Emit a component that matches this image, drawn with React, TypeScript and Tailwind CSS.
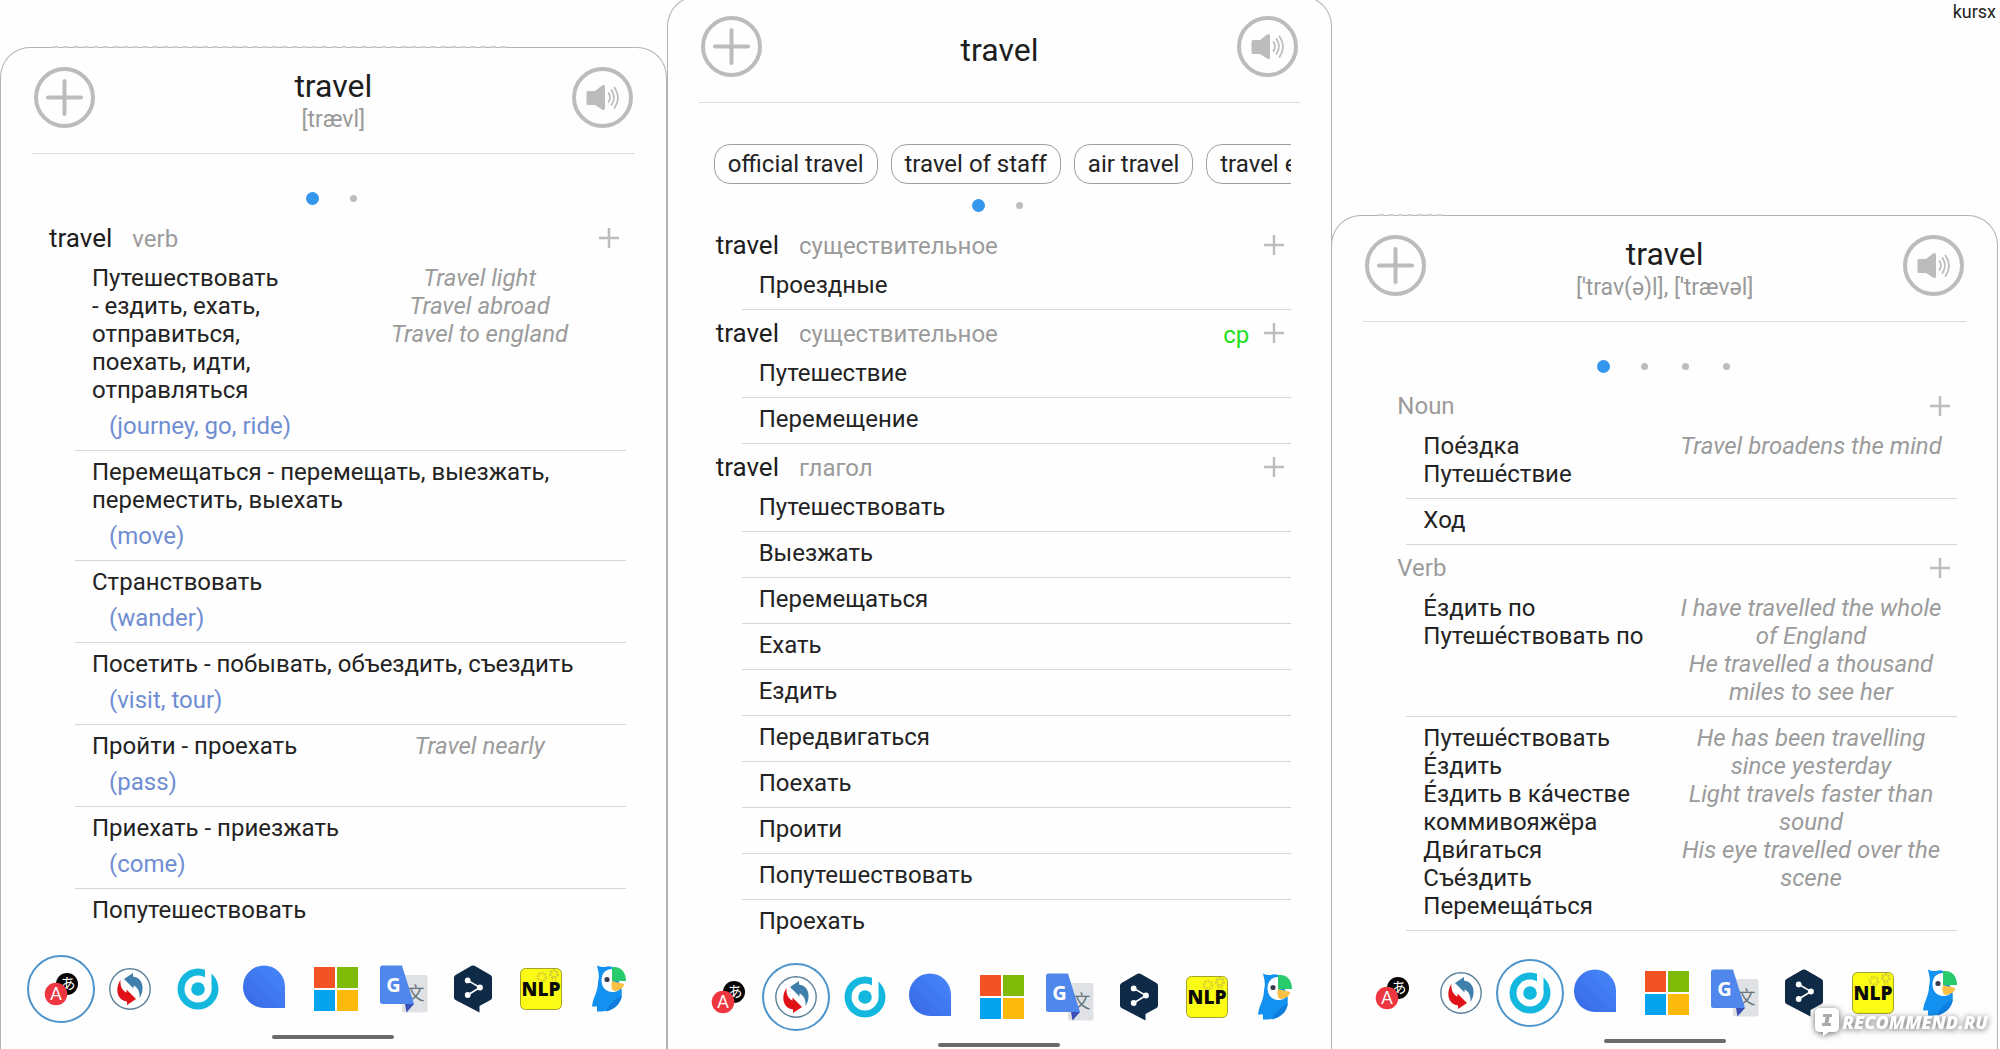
import type { ReactNode } from 'react';
import clsx from 'clsx';

interface Row {
    lines: string[];
    gloss?: string;
    examples?: string[];
}

interface Section {
    word?: string;
    pos: string;
    badge?: string;
    rows: Row[];
    openEnded?: boolean;
}

interface SheetProps {
    title: string;
    phonetic?: string;
    chips?: string[];
    pages: number;
    sections: Section[];
    activeEngine: string;
    className?: string;
    footerClassName?: string;
    peekClassName?: string;
}

const verbSections: Section[] = [
    {
        word: 'travel',
        pos: 'verb',
        openEnded: true,
        rows: [
            {
                lines: ['Путешествовать', '- ездить, ехать,', 'отправиться,', 'поехать, идти,', 'отправляться'],
                gloss: '(journey, go, ride)',
                examples: ['Travel light', 'Travel abroad', 'Travel to england'],
            },
            { lines: ['Перемещаться - перемещать, выезжать,', 'переместить, выехать'], gloss: '(move)' },
            { lines: ['Странствовать'], gloss: '(wander)' },
            { lines: ['Посетить - побывать, объездить, съездить'], gloss: '(visit, tour)' },
            { lines: ['Пройти - проехать'], gloss: '(pass)', examples: ['Travel nearly'] },
            { lines: ['Приехать - приезжать'], gloss: '(come)' },
            { lines: ['Попутешествовать'] },
        ],
    },
];

const mixedSections: Section[] = [
    { word: 'travel', pos: 'существительное', rows: [{ lines: ['Проездные'] }] },
    {
        word: 'travel',
        pos: 'существительное',
        badge: 'ср',
        rows: [{ lines: ['Путешествие'] }, { lines: ['Перемещение'] }],
    },
    {
        word: 'travel',
        pos: 'глагол',
        openEnded: true,
        rows: [
            { lines: ['Путешествовать'] },
            { lines: ['Выезжать'] },
            { lines: ['Перемещаться'] },
            { lines: ['Ехать'] },
            { lines: ['Ездить'] },
            { lines: ['Передвигаться'] },
            { lines: ['Поехать'] },
            { lines: ['Проити'] },
            { lines: ['Попутешествовать'] },
            { lines: ['Проехать'] },
        ],
    },
];

const stressedSections: Section[] = [
    {
        pos: 'Noun',
        rows: [
            { lines: ['Пое́здка', 'Путеше́ствие'], examples: ['Travel broadens the mind'] },
            { lines: ['Ход'] },
        ],
    },
    {
        pos: 'Verb',
        rows: [
            {
                lines: ['Е́здить по', 'Путеше́ствовать по'],
                examples: ['I have travelled the whole of England', 'He travelled a thousand miles to see her'],
            },
            {
                lines: [
                    'Путеше́ствовать',
                    'Е́здить',
                    'Е́здить в ка́честве',
                    'коммивояжёра',
                    'Дви́гаться',
                    'Съе́здить',
                    'Перемеща́ться',
                ],
                examples: [
                    'He has been travelling since yesterday',
                    'Light travels faster than sound',
                    'His eye travelled over the scene',
                ],
            },
        ],
    },
];

function Glyph({ children }: { children: ReactNode }) {
    return (
        <svg viewBox="-24 -24 48 48" className="h-12 w-12" aria-hidden="true">
            {children}
        </svg>
    );
}

const engines: { name: string; icon: ReactNode }[] = [
    {
        name: 'Yomi',
        icon: (
            <Glyph>
                <circle cx="6" cy="-5" r="11" fill="#050505" />
                <text x="7" y="0" fontSize="15" fill="#fff" textAnchor="middle" fontFamily="Noto Sans CJK JP, sans-serif">あ</text>
                <circle cx="-5" cy="5" r="11.3" fill="#ec3740" />
                <text x="-5" y="11" fontSize="17" fill="#fff" textAnchor="middle" fontFamily="Lato, sans-serif">A</text>
            </Glyph>
        ),
    },
    {
        name: 'Reverso',
        icon: (
            <Glyph>
                <circle r="20.2" fill="#fff" stroke="#5b8199" strokeWidth="1.4" />
                <path d="M-6 -10L3 -16V-12.5C13.5 -11 15 1 9.5 9C10 3 8 -1.5 3.5 -3.500V-0.500Z" fill="#3f7fab" />
                <path d="M6 10L-3 16V12.500C-13.500 11 -15 -1 -9.500 -9C-10 -3 -8 1.500 -3.500 3.500V0.500Z" fill="#e01218" />
            </Glyph>
        ),
    },
    {
        name: 'Dict',
        icon: (
            <Glyph>
                <circle r="20.5" fill="#14b8df" />
                <circle r="13.5" fill="#fff" />
                <path d="M7 -22H13.5V0H7Z" fill="#fff" />
                <circle r="6.8" fill="#14b8df" />
            </Glyph>
        ),
    },
    {
        name: 'Alice',
        icon: (
            <Glyph>
                <defs>
                    <linearGradient id="drop" x1="0" y1="1" x2="1" y2="0">
                        <stop offset="0" stopColor="#3768e4" />
                        <stop offset="1" stopColor="#4788fb" />
                    </linearGradient>
                </defs>
                <path d="M-3 -23.5A21 21 0 0 1 18 -2.5V19H-3A21 21 0 0 1 -24 -2.5A21 21 0 0 1 -3 -23.5Z" fill="url(#drop)" />
            </Glyph>
        ),
    },
    {
        name: 'Microsoft',
        icon: (
            <Glyph>
                <path d="M-22 -22H-1V-1H-22Z" fill="#f25325" />
                <path d="M1 -22H22V-1H1Z" fill="#7fba08" />
                <path d="M-22 1H-1V22H-22Z" fill="#06a4ee" />
                <path d="M1 1H22V22H1Z" fill="#fdb90c" />
            </Glyph>
        ),
    },
    {
        name: 'Google',
        icon: (
            <Glyph>
                <rect x="-2" y="-14" width="25.5" height="37.5" rx="2" fill="#dfe1e4" />
                <text x="11.5" y="11" fontSize="18" fill="#66757b" textAnchor="middle" fontFamily="Noto Sans CJK SC, sans-serif">文</text>
                <path d="M1 15H10L2.5 23.5Z" fill="#3c4fb4" />
                <path d="M-21.5 -23.5H-2L10 15H-21.5Q-24 15 -24 12.5V-21Q-24 -23.5 -21.5 -23.5Z" fill="#5087ec" />
                <text x="-10.5" y="2.5" fontSize="20" fontWeight="700" fill="#fff" textAnchor="middle" fontFamily="Open Sans, sans-serif">G</text>
            </Glyph>
        ),
    },
    {
        name: 'DeepL',
        icon: (
            <Glyph>
                <path d="M-1.5 -23.2Q0 -24 1.5 -23.2L17.5 -14Q19 -13 19 -11.5V8.5Q19 10 17.5 11L6.5 17V23.5L-17.5 11Q-19 10 -19 8.5V-11.5Q-19 -13 -17.5 -14Z" fill="#0f2a47" />
                <path d="M-5.3 -8.6L7 -1.5L-5.3 6" fill="none" stroke="#fff" strokeWidth="1.6" />
                <circle cx="-5.3" cy="-8.6" r="2.9" fill="#fff" />
                <circle cx="7" cy="-1.5" r="2.9" fill="#fff" />
                <circle cx="-5.3" cy="6" r="2.9" fill="#fff" />
            </Glyph>
        ),
    },
    {
        name: 'NLP',
        icon: (
            <Glyph>
                <rect x="-20.5" y="-20.5" width="41" height="41" rx="5" fill="#fbfb16" stroke="#a3a32c" />
                <circle cx="1" cy="-12" r="4" fill="none" stroke="#dcd62a" strokeWidth="3" strokeDasharray="2 1" />
                <circle cx="13" cy="-15" r="3.5" fill="none" stroke="#d2cc35" strokeWidth="3" strokeDasharray="2 1" />
                <circle cx="13" cy="-7" r="2.5" fill="none" stroke="#e2dc2a" strokeWidth="2" strokeDasharray="2 1" />
                <text y="6.5" fontSize="19" fontWeight="800" fill="#0a0a0a" textAnchor="middle" fontFamily="Open Sans, sans-serif">NLP</text>
            </Glyph>
        ),
    },
    {
        name: 'Papago',
        icon: (
            <Glyph>
                <path d="M-13 -23.5Q-8 -21 -3 -22.5Q0 -23 2 -22L11 -3C14 8 9 21 -8 22.5H-13V17.5H-18C-17 8 -12 3 -12 -7C-10 -14 -12 -18 -13 -23.5Z" fill="#1391f0" />
                <path d="M-2 18C3 12 7 9 12 6C11 14 6 20 -4 22.5Z" fill="#0f7ddd" />
                <path d="M2 -20C-5 -20 -8.5 -15 -8.5 -8.5C-8.5 -2 -4 3 2 3C5 3 7 2.5 9 1L2 -8Z" fill="#fff" />
                <circle cx="-3" cy="-9.5" r="2.6" fill="#3b3b52" />
                <path d="M2 -8L14 -5C14 -1 9 2 4 2C1 0 1 -4 2 -8Z" fill="#f9c043" />
                <path d="M2 -22C11 -23 16 -17 16 -8H2Z" fill="#28cb6b" />
            </Glyph>
        ),
    },
];

function RoundButton({ label, children }: { label: string; children: ReactNode }) {
    return (
        <button aria-label={label} className="h-[61px] w-[61px] shrink-0">
            <svg viewBox="0 0 61 61" className="h-full w-full" fill="none" stroke="#bcbcbc" strokeLinecap="round">
                <circle cx="30.5" cy="30.5" r="28.5" strokeWidth="4" />
                {children}
            </svg>
        </button>
    );
}

function SheetHeader({ title, phonetic }: { title: string; phonetic?: string }) {
    return (
        <header className="mx-[31px] flex items-start justify-between border-b border-[#dcdcdc] px-[2px] pt-[19px] pb-[18px]">
            <RoundButton label="Add">
                <path d="M14 30.5H47M30.5 14V47" strokeWidth="4" />
            </RoundButton>
            <div className="flex h-[68px] flex-col items-center justify-center">
                <h1 className="text-[32px] leading-[38px] text-[#1d1d1d]">{title}</h1>
                {phonetic && <p className="text-[23px] leading-[30px] text-[#9a9a9a]">{phonetic}</p>}
            </div>
            <RoundButton label="Listen">
                <path d="M16 24H23L30 18.5Q33 17 33 20V41Q33 44 30 42.5L23 38H16Q14.5 38 14.5 36.5V25.5Q14.5 24 16 24Z" fill="#bcbcbc" stroke="none" />
                <path d="M36.5 26Q39.5 30.5 36.5 35M39.5 23Q44.5 30.5 39.5 38M42.5 20.5Q49.5 30.5 42.5 41" strokeWidth="1.8" />
            </RoundButton>
        </header>
    );
}

function EntryRow({ row, divided }: { row: Row; divided: boolean }) {
    return (
        <li className={clsx('pt-[7px] pb-2.5 pl-[17px] leading-7', divided && 'border-b border-[#d6d6d6]')}>
            <div className="flex justify-between">
                <div className="whitespace-nowrap text-[#232323]">
                    {row.lines.map((line) => (
                        <p key={line}>{line}</p>
                    ))}
                </div>
                {row.examples && (
                    <div className="mr-2 w-[276px] text-center text-[#9b9b9b] italic">
                        {row.examples.map((example) => (
                            <p key={example}>{example}</p>
                        ))}
                    </div>
                )}
            </div>
            {row.gloss && <p className="mt-2 pl-[17px] text-[#6f8dd2]">{row.gloss}</p>}
        </li>
    );
}

function EntrySection({ section }: { section: Section }) {
    return (
        <section>
            <div className={clsx('flex h-[42px] items-center pt-1 pr-[46px]', section.word ? 'pl-12' : 'pl-[65px]')}>
                <div className="flex flex-1 items-baseline gap-5">
                    {section.word && <h2 className="text-[26px] leading-8 text-[#1d1d1d]">{section.word}</h2>}
                    <span className="leading-8 text-[#9b9b9b]">{section.pos}</span>
                </div>
                {section.badge && <span className="mr-3.5 pt-1 leading-8 text-[#21e021]">{section.badge}</span>}
                <button aria-label="Add entry">
                    <svg viewBox="0 0 22 22" className="h-[22px] w-[22px]" stroke="#bdbdbd" strokeWidth="2.5">
                        <path d="M1 11H21M11 1V21" />
                    </svg>
                </button>
            </div>
            <ul className="mr-10 ml-[74px]">
                {section.rows.map((row, i) => (
                    <EntryRow key={row.lines[0]} row={row} divided={!section.openEnded || i < section.rows.length - 1} />
                ))}
            </ul>
        </section>
    );
}

function Sheet({ title, phonetic, chips, pages, sections, activeEngine, className, footerClassName, peekClassName }: SheetProps) {
    return (
        <article className={clsx('relative -mr-px flex flex-col rounded-t-[30px] border border-b-0 border-[#b3b3b3] bg-[#fefefe]', className)}>
            {/* Page text showing just above the sheet edge */}
            {peekClassName && <div className={clsx('absolute -top-[2px] border-t-2 border-dashed border-[#d0d0d0]', peekClassName)} />}

            <SheetHeader title={title} phonetic={phonetic} />

            {chips && (
                <div className="mt-[41px] mr-10 -mb-[23px] ml-[46px] flex gap-[13px] overflow-hidden">
                    {chips.map((chip) => (
                        <button key={chip} className="h-10 shrink-0 rounded-2xl border border-[#9f9f9f] px-[13px] whitespace-nowrap text-[#232323]">
                            {chip}
                        </button>
                    ))}
                </div>
            )}

            {/* Pager */}
            <div className="mt-[27px] flex h-[34px] items-center justify-center">
                {Array.from({ length: pages }, (_, i) => (
                    <span key={i} className="flex w-[41px] justify-center">
                        <span className={clsx('rounded-full', i === 0 ? 'h-[13px] w-[13px] bg-[#3496ec]' : 'h-[7px] w-[7px] bg-[#bdbdbd]')} />
                    </span>
                ))}
            </div>

            {sections.map((section, i) => (
                <EntrySection key={i} section={section} />
            ))}

            {/* Translation engines */}
            <footer className={clsx('mt-auto', footerClassName)}>
                <nav className="grid grid-cols-9 pr-[21px] pl-[26px]">
                    {engines.map(({ name, icon }) => (
                        <button
                            key={name}
                            aria-label={name}
                            className={clsx(
                                'flex h-[68px] w-[68px] items-center justify-center rounded-full',
                                name === activeEngine && 'border-2 border-[#4c94cb]',
                            )}
                        >
                            {icon}
                        </button>
                    ))}
                </nav>
                <div className="mx-auto mt-3 h-1 w-[122px] rounded-full bg-[#6a6a6a]" />
            </footer>
        </article>
    );
}

export default function App() {
    return (
        <main className="relative min-h-screen overflow-hidden bg-[#fefefe] font-[Roboto,'Noto_Sans',sans-serif] text-2xl">
            <div className="grid min-h-screen grid-cols-3 pr-[3px]">
                <Sheet
                    title="travel"
                    phonetic="[trævl]"
                    pages={2}
                    sections={verbSections}
                    activeEngine="Yomi"
                    className="mt-[47px]"
                    footerClassName="pb-2.5"
                    peekClassName="left-[52px] w-[453px]"
                />
                <Sheet
                    title="travel"
                    chips={['official travel', 'travel of staff', 'air travel', 'travel expenses']}
                    pages={2}
                    sections={mixedSections}
                    activeEngine="Reverso"
                    className="-mt-1 ml-px"
                    footerClassName="pb-0.5"
                />
                <Sheet
                    title="travel"
                    phonetic="[ˈtrav(ə)l], [ˈtrævəl]"
                    pages={4}
                    sections={stressedSections}
                    activeEngine="Dict"
                    className="mt-[215px]"
                    footerClassName="pb-1.5"
                    peekClassName="left-[46px] w-[64px]"
                />
            </div>

            <span className="absolute top-0 right-1 text-lg leading-6 text-[#222]">kursx</span>

            {/* Site watermark */}
            <div className="absolute right-3 bottom-3 flex items-center gap-0.5 drop-shadow-[0_1px_3px_rgba(0,0,0,0.6)]">
                <svg viewBox="0 0 26 30" className="h-[30px] w-[26px]" aria-hidden="true">
                    <path d="M6 1H20Q25 1 25 6V20Q25 25 20 25H15L9 29V25H6Q1 25 1 20V6Q1 1 6 1Z" fill="#fff" />
                    <path d="M9 7H18V10H15.5L14.5 16H17V19H8V16H10.5L11.5 10H9Z" fill="#aaa" />
                </svg>
                <span className="font-['Open_Sans',sans-serif] text-lg leading-7 font-extrabold text-white italic">RECOMMEND.RU</span>
            </div>
        </main>
    );
}
